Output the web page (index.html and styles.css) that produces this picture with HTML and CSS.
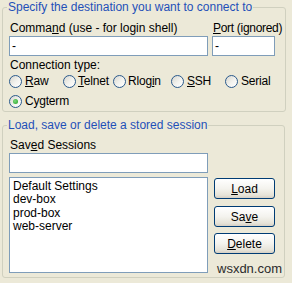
FILE: index.html
```html
<!DOCTYPE html>
<html>
<head>
<meta charset="utf-8">
<link rel="stylesheet" href="styles.css">
</head>
<body>
<div class="dialog">
  <fieldset class="group g1">
    <legend>Specify the destination you want to connect to</legend>
    <div class="host-row">
      <div class="field cmd">
        <div class="label">Comma<u>n</u>d (use - for login shell)</div>
        <div class="text">-</div>
      </div>
      <div class="field port">
        <div class="label"><u>P</u>ort (ignored)</div>
        <div class="text">-</div>
      </div>
    </div>
    <div class="conn-label">Connection type:</div>
    <div class="radios row1">
      <div class="radio c-raw"><span class="circle"></span><span><u>R</u>aw</span></div>
      <div class="radio c-telnet"><span class="circle"></span><span><u>T</u>elnet</span></div>
      <div class="radio c-rlogin"><span class="circle"></span><span>Rlog<u>i</u>n</span></div>
      <div class="radio c-ssh"><span class="circle"></span><span><u>S</u>SH</span></div>
      <div class="radio c-serial"><span class="circle"></span><span>Serial</span></div>
    </div>
    <div class="radios row2">
      <div class="radio checked"><span class="circle"></span><span>Cygterm</span></div>
    </div>
  </fieldset>
  <fieldset class="group g2">
    <legend>Load, save or delete a stored session</legend>
    <div class="label">Sav<u>e</u>d Sessions</div>
    <div class="text session-name"></div>
    <div class="sess-row">
      <ul class="list">
        <li>Default Settings</li>
        <li>dev-box</li>
        <li>prod-box</li>
        <li>web-server</li>
      </ul>
      <div class="buttons">
        <button class="btn b-load"><u>L</u>oad</button>
        <button class="btn b-save">Sa<u>v</u>e</button>
        <button class="btn b-delete"><u>D</u>elete</button>
      </div>
    </div>
  </fieldset>
  <div class="watermark">wsxdn.com</div>
</div>
</body>
</html>
```
FILE: styles.css
```css
html, body {
  margin: 0;
  padding: 0;
}
body {
  background: #ECE9D8;
  font-family: "Liberation Sans", Arial, sans-serif;
  font-size: 12px;
  line-height: 14px;
  color: #000;
  width: 292px;
  height: 283px;
  overflow: hidden;
}
.dialog {
  position: relative;
  width: 292px;
  height: 283px;
}
.group {
  margin: 0 6px 0 2px;
  padding: 7px 6px 2px 6px;
  border: 1px solid #D0D0BF;
  border-radius: 3px;
  min-width: 0;
}
.group legend {
  padding: 0 1px;
  margin-left: -2px;
  color: #1F50B8;
  line-height: 14px;
}
.host-row {
  display: flex;
  gap: 4px;
}
.cmd { width: 199px; flex: none; }
.port { width: 63px; flex: none; }
.label {
  line-height: 14px;
  padding-left: 1px;
  white-space: nowrap;
}
.port .label {
  letter-spacing: -0.3px;
}
.text {
  box-sizing: border-box;
  height: 20px;
  margin-top: 1px;
  border: 1px solid #7F9DB9;
  background: #fff;
  padding-left: 2px;
  line-height: 18px;
}
.conn-label {
  margin-top: 2px;
  padding-left: 1px;
}
.radios {
  display: flex;
  white-space: nowrap;
}
.row1 { margin-top: 1px; }
.row2 { margin-top: 4px; }
.radio {
  display: flex;
  align-items: center;
  height: 16px;
  flex: none;
  letter-spacing: -0.2px;
}
.c-raw { width: 54px; }
.c-telnet { width: 50px; }
.c-rlogin { width: 58px; }
.c-ssh { width: 54px; }
.circle {
  box-sizing: border-box;
  width: 13px;
  height: 13px;
  border-radius: 50%;
  border: 1px solid #2A5A8C;
  margin-right: 3px;
  background: linear-gradient(135deg, #D8D7CF 0%, #F3F3EF 55%, #FFFFFF 100%);
  display: flex;
  align-items: center;
  justify-content: center;
  flex: none;
}
.c-telnet .circle,
.c-rlogin .circle {
  margin-right: 2px;
}
.checked .circle::after {
  content: "";
  width: 5px;
  height: 5px;
  border-radius: 50%;
  background: radial-gradient(circle at 40% 40%, #7DD97D, #21A121);
}
.g2 {
  margin-top: 6px;
  margin-right: 7px;
  padding: 6px 6px 4px 6px;
}
.session-name {
  width: 199px;
}
.sess-row {
  display: flex;
  margin-top: 4px;
}
.list {
  box-sizing: border-box;
  width: 199px;
  height: 96px;
  margin: 0;
  padding: 2px 3px;
  list-style: none;
  background: #fff;
  border: 1px solid #7F9DB9;
  line-height: 13.3px;
  flex: none;
}
.buttons {
  display: flex;
  flex-direction: column;
  margin-left: 6px;
}
.btn {
  box-sizing: border-box;
  width: 61px;
  height: 21px;
  padding: 0;
  font-family: "Liberation Sans", Arial, sans-serif;
  font-size: 12px;
  color: #000;
  border: 1px solid #003C74;
  border-radius: 3px;
  background: linear-gradient(to bottom, #FFFFFF 0%, #F4F3EE 50%, #E6E3D8 85%, #D6D0C5 100%);
}
.b-load { margin-top: 1px; }
.b-save { margin-top: 7px; }
.b-delete { margin-top: 6px; }
.watermark {
  position: absolute;
  left: 217px;
  top: 262px;
  font-size: 13px;
  line-height: 14px;
  color: #2B2B2B;
}
```
